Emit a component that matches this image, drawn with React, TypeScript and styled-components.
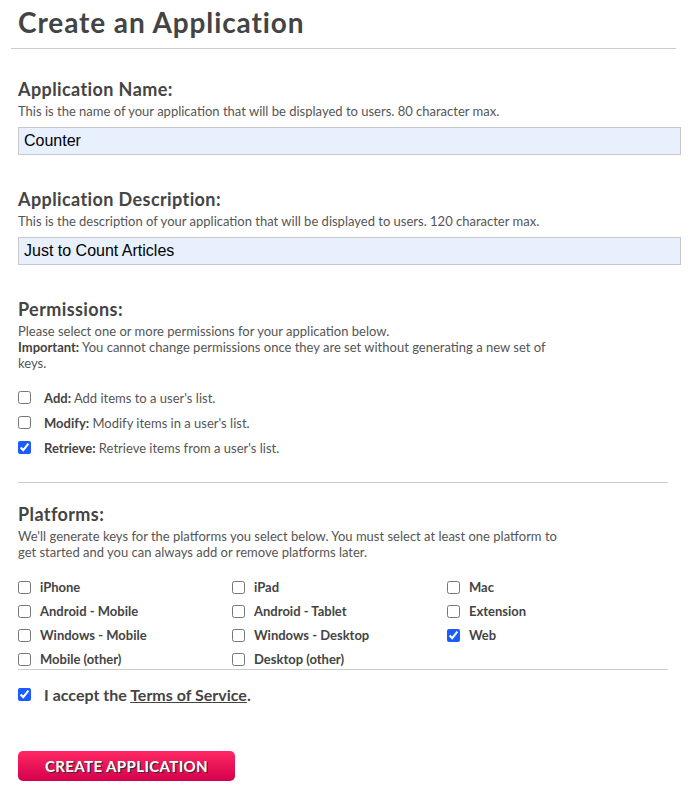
import React from 'react'
import styled, { createGlobalStyle } from 'styled-components'

const GlobalStyle = createGlobalStyle`
  html, body {
    margin: 0;
    padding: 0;
    background: #fff;
  }
  body {
    font-family: Lato, 'Open Sans', sans-serif;
    color: #444;
  }
`

const permissions = [
  { name: 'Add', text: "Add items to a user's list.", checked: false },
  { name: 'Modify', text: "Modify items in a user's list.", checked: false },
  { name: 'Retrieve', text: "Retrieve items from a user's list.", checked: true },
]

const platforms = [
  { name: 'iPhone', checked: false },
  { name: 'iPad', checked: false },
  { name: 'Mac', checked: false },
  { name: 'Android - Mobile', checked: false },
  { name: 'Android - Tablet', checked: false },
  { name: 'Extension', checked: false },
  { name: 'Windows - Mobile', checked: false },
  { name: 'Windows - Desktop', checked: false },
  { name: 'Web', checked: true },
  { name: 'Mobile (other)', checked: false },
  { name: 'Desktop (other)', checked: false },
]

export default function App() {
  return (
    <>
      <GlobalStyle />
      <Page>
        <Header>
          <h1>Create an Application</h1>
        </Header>

        <Form>
          <Field $bottom={33}>
            <Heading>Application Name:</Heading>
            <Hint>This is the name of your application that will be displayed to users. 80 character max.</Hint>
            <TextInput defaultValue='Counter' />
          </Field>

          <Field $bottom={33}>
            <Heading>Application Description:</Heading>
            <Hint>This is the description of your application that will be displayed to users. 120 character max.</Hint>
            <TextInput defaultValue='Just to Count Articles' />
          </Field>

          <Field $bottom={22}>
            <Heading>Permissions:</Heading>
            <Hint>
              Please select one or more permissions for your application below.
              <br />
              <b>Important:</b> You cannot change permissions once they are set without generating a new set of
              keys.
            </Hint>
            <PermissionList>
              {permissions.map(p => (
                <PermissionRow key={p.name}>
                  <Check type='checkbox' defaultChecked={p.checked} />
                  <span>
                    <b>{p.name}:</b> {p.text}
                  </span>
                </PermissionRow>
              ))}
            </PermissionList>
          </Field>

          <Divider $bottom={20} />

          <Field $bottom={0}>
            <Heading>Platforms:</Heading>
            <Hint>
              We'll generate keys for the platforms you select below. You must select at least one platform to
              get started and you can always add or remove platforms later.
            </Hint>
            <PlatformGrid>
              {platforms.map(p => (
                <PlatformItem key={p.name}>
                  <Check type='checkbox' defaultChecked={p.checked} />
                  <span>{p.name}</span>
                </PlatformItem>
              ))}
            </PlatformGrid>
          </Field>

          <Divider $bottom={14} />

          <Accept>
            <Check type='checkbox' defaultChecked />
            <span>
              I accept the <a href='#'>Terms of Service</a>.
            </span>
          </Accept>

          <CreateButton type='button'>CREATE APPLICATION</CreateButton>
        </Form>
      </Page>
    </>
  )
}

const Page = styled.div`
  width: 694px;
  padding-bottom: 26px;
`

const Header = styled.header`
  margin: 0 18px 0 11px;
  padding: 5px 0 9px 7px;
  border-bottom: 1px solid #ccc;

  h1 {
    margin: 0;
    font-size: 28px;
    line-height: 34px;
    font-weight: 700;
    letter-spacing: 0.9px;
    color: #444;
  }
`

const Form = styled.form`
  width: 663px;
  padding-left: 18px;
  padding-top: 29px;
`

const Field = styled.div<{ $bottom: number }>`
  display: flex;
  flex-direction: column;
  margin-bottom: ${props => props.$bottom}px;
`

const Heading = styled.h2`
  margin: 0;
  font-size: 18px;
  line-height: 22px;
  font-weight: 700;
  letter-spacing: 0.4px;
  color: #444;
`

const Hint = styled.p`
  margin: 3px 0 0;
  max-width: 545px;
  font-size: 13px;
  line-height: 16px;
  color: #555;

  b {
    font-weight: 700;
    color: #444;
  }
`

const TextInput = styled.input`
  box-sizing: border-box;
  margin-top: 8px;
  width: 100%;
  height: 28px;
  padding: 0 5px;
  border: 1px solid #c8c8c8;
  background: #e8f0fe;
  font-family: 'Liberation Sans', Arial, sans-serif;
  font-size: 16px;
  color: #000;
  outline: none;
`

const Check = styled.input`
  width: 13px;
  height: 13px;
  margin: 0;
  flex: none;
  accent-color: #1a5cff;
`

const PermissionList = styled.div`
  display: flex;
  flex-direction: column;
  margin-top: 14px;
`

const PermissionRow = styled.label`
  display: flex;
  align-items: center;
  gap: 13px;
  height: 25px;
  font-size: 13px;
  color: #555;

  b {
    font-weight: 700;
    color: #444;
  }
`

const Divider = styled.hr<{ $bottom: number }>`
  margin: 0 0 ${props => props.$bottom}px;
  width: 650px;
  border: none;
  border-top: 1px solid #ccc;
`

const PlatformGrid = styled.div`
  display: grid;
  grid-template-columns: 214px 215px 1fr;
  row-gap: 4px;
  margin-top: 17px;
`

const PlatformItem = styled.label`
  display: flex;
  align-items: center;
  gap: 9px;
  height: 20px;
  font-size: 13px;
  font-weight: 700;
  color: #444;
`

const Accept = styled.label`
  display: flex;
  align-items: center;
  gap: 13px;
  height: 20px;
  font-size: 16px;
  font-weight: 700;
  color: #444;

  a {
    color: #444;
    text-decoration: underline;
  }
`

const CreateButton = styled.button`
  display: block;
  margin-top: 47px;
  width: 217px;
  height: 30px;
  border: none;
  border-radius: 5px;
  background: linear-gradient(#ff2863, #d4004c);
  font-family: Lato, 'Open Sans', sans-serif;
  font-size: 15px;
  font-weight: 700;
  letter-spacing: 0.4px;
  color: #fff;
  text-shadow: 1px 1px 0 #333;
  cursor: pointer;
`
